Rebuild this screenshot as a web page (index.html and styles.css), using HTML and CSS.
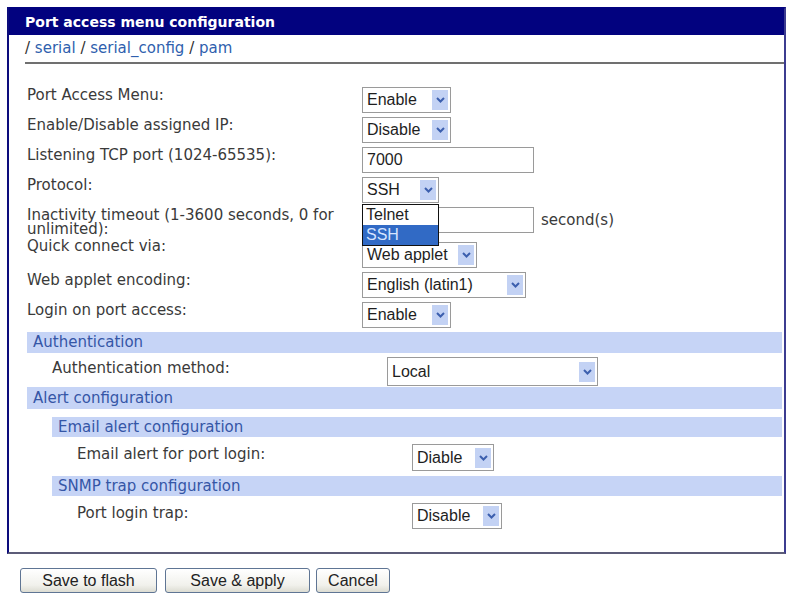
FILE: index.html
```html
<!DOCTYPE html>
<html>
<head>
<meta charset="utf-8">
<link rel="stylesheet" href="styles.css">
</head>
<body>
<div class="panel">
  <div class="title">Port access menu configuration</div>
  <div class="crumbs"><span class="sep">/</span> <a>serial</a> <span class="sep">/</span> <a>serial_config</a> <span class="sep">/</span> <a>pam</a></div>
  <div class="form">
    <div class="row">
      <div class="label">Port Access Menu:</div>
      <div class="sel w89"><span class="val">Enable</span><span class="arr"><svg width="9" height="6" viewBox="0 0 9 6"><polyline points="1,1 4.5,4.5 8,1" fill="none" stroke="#3c5fae" stroke-width="2"/></svg></span></div>
    </div>
    <div class="row">
      <div class="label">Enable/Disable assigned IP:</div>
      <div class="sel w89"><span class="val">Disable</span><span class="arr"><svg width="9" height="6" viewBox="0 0 9 6"><polyline points="1,1 4.5,4.5 8,1" fill="none" stroke="#3c5fae" stroke-width="2"/></svg></span></div>
    </div>
    <div class="row">
      <div class="label">Listening TCP port (1024-65535):</div>
      <div class="input w172">7000</div>
    </div>
    <div class="row">
      <div class="label">Protocol:</div>
      <div class="sel w77 open"><span class="val">SSH</span><span class="arr"><svg width="9" height="6" viewBox="0 0 9 6"><polyline points="1,1 4.5,4.5 8,1" fill="none" stroke="#3c5fae" stroke-width="2"/></svg></span>
        <div class="list"><div class="opt">Telnet</div><div class="opt picked">SSH</div></div>
      </div>
    </div>
    <div class="row row-wrap">
      <div class="label">Inactivity timeout (1-3600 seconds, 0 for unlimited):</div>
      <div class="input w172"></div>
      <span class="unit">second(s)</span>
    </div>
    <div class="row">
      <div class="label">Quick connect via:</div>
      <div class="sel w115 drop"><span class="val">Web applet</span><span class="arr"><svg width="9" height="6" viewBox="0 0 9 6"><polyline points="1,1 4.5,4.5 8,1" fill="none" stroke="#3c5fae" stroke-width="2"/></svg></span></div>
    </div>
    <div class="row">
      <div class="label">Web applet encoding:</div>
      <div class="sel w164"><span class="val">English (latin1)</span><span class="arr"><svg width="9" height="6" viewBox="0 0 9 6"><polyline points="1,1 4.5,4.5 8,1" fill="none" stroke="#3c5fae" stroke-width="2"/></svg></span></div>
    </div>
    <div class="row">
      <div class="label">Login on port access:</div>
      <div class="sel w89"><span class="val">Enable</span><span class="arr"><svg width="9" height="6" viewBox="0 0 9 6"><polyline points="1,1 4.5,4.5 8,1" fill="none" stroke="#3c5fae" stroke-width="2"/></svg></span></div>
    </div>

    <div class="bar">Authentication</div>
    <div class="group">
      <div class="row row-auth">
        <div class="label">Authentication method:</div>
        <div class="sel w211 tall"><span class="val">Local</span><span class="arr"><svg width="9" height="6" viewBox="0 0 9 6"><polyline points="1,1 4.5,4.5 8,1" fill="none" stroke="#3c5fae" stroke-width="2"/></svg></span></div>
      </div>
    </div>

    <div class="bar bar-alert">Alert configuration</div>
    <div class="group">
      <div class="bar bar-sub">Email alert configuration</div>
      <div class="group">
        <div class="row row-sub">
          <div class="label">Email alert for port login:</div>
          <div class="sel w82 mid"><span class="val">Diable</span><span class="arr"><svg width="9" height="6" viewBox="0 0 9 6"><polyline points="1,1 4.5,4.5 8,1" fill="none" stroke="#3c5fae" stroke-width="2"/></svg></span></div>
        </div>
      </div>
      <div class="bar bar-sub">SNMP trap configuration</div>
      <div class="group">
        <div class="row row-sub">
          <div class="label">Port login trap:</div>
          <div class="sel w90"><span class="val">Disable</span><span class="arr"><svg width="9" height="6" viewBox="0 0 9 6"><polyline points="1,1 4.5,4.5 8,1" fill="none" stroke="#3c5fae" stroke-width="2"/></svg></span></div>
        </div>
      </div>
    </div>
  </div>
</div>
<div class="buttons">
  <button class="btn b137">Save to flash</button>
  <button class="btn b145">Save &amp; apply</button>
  <button class="btn b74">Cancel</button>
</div>
</body>
</html>
```
FILE: styles.css
```css
html, body {
  margin: 0;
  padding: 0;
  background: #ffffff;
}
body {
  padding: 7px 0 0 7px;
  font-family: "DejaVu Sans", Verdana, sans-serif;
  font-size: 15px;
  color: #3a3a3a;
}
.panel {
  width: 775px;
  border: 2px solid #0c0c7c;
  border-bottom-color: #5c5c78;
  border-right-color: #3c3c90;
  padding-bottom: 18px;
}
.title {
  background: #02027f;
  color: #ffffff;
  font-weight: bold;
  font-size: 14px;
  height: 27px;
  line-height: 29px;
  padding-left: 16px;
  margin-top: -2px;
  padding-top: 1px;
}
.crumbs {
  margin-left: 16px;
  border-bottom: 2px solid #707070;
  height: 27px;
  line-height: 26px;
  font-size: 15px;
  color: #303030;
}
.crumbs a {
  color: #2f5fae;
  text-decoration: none;
}
.form {
  padding: 23px 2px 0 18px;
}
.row {
  display: flex;
  align-items: flex-start;
  margin-bottom: 4px;
  position: relative;
}
.row-wrap {
  margin-bottom: 2px;
}
.label {
  width: 335px;
  flex: none;
  padding-top: 1px;
  line-height: 14px;
  padding-right: 18px;
  box-sizing: border-box;
}
.sel, .input {
  box-sizing: border-box;
  height: 26px;
  border: 1px solid #9a9a9a;
  background: #fff;
  font-family: "Liberation Sans", Arial, sans-serif;
  font-size: 16px;
  color: #1e1e1e;
  flex: none;
}
.sel {
  position: relative;
  display: flex;
  align-items: center;
  padding: 0 2px 0 4px;
}
.sel .val {
  flex: 1;
  white-space: nowrap;
}
.arr {
  width: 16px;
  height: 20px;
  background: #c3d2f4;
  display: flex;
  align-items: center;
  justify-content: center;
  flex: none;
}
.input {
  padding-left: 4px;
  line-height: 24px;
}
.unit {
  margin-left: 7px;
  padding-top: 6px;
  line-height: 14px;
}
.w77 { width: 77px; }
.w82 { width: 82px; }
.w89 { width: 89px; }
.w90 { width: 90px; }
.w115 { width: 115px; }
.w164 { width: 164px; }
.w172 { width: 172px; }
.w211 { width: 211px; }
.tall { height: 29px; }
.mid { height: 27px; }
.drop { margin-top: 4px; }
.list {
  position: absolute;
  left: -1px;
  top: 26px;
  width: 77px;
  box-sizing: border-box;
  border: 1px solid #111;
  background: #fff;
  z-index: 2;
}
.opt {
  height: 20px;
  line-height: 20px;
  padding-left: 3px;
  font-size: 16px;
  color: #1e1e1e;
}
.opt.picked {
  background: #316ac5;
  color: #d6e4ff;
}
.bar {
  background: #c6d4f6;
  color: #3556a6;
  height: 21px;
  line-height: 21px;
  padding-left: 6px;
  font-size: 15px;
}
.bar-alert {
  height: 22px;
  line-height: 22px;
  margin-bottom: 8px;
}
.bar-sub {
  height: 20px;
  line-height: 20px;
}
.group {
  margin-left: 25px;
}
.row-auth {
  margin-top: 4px;
  margin-bottom: 1px;
}
.row-auth .label { padding-top: 4px; }
.row-sub {
  margin-top: 7px;
  margin-bottom: 5px;
}
.row-sub .label { padding-top: 3px; }
.buttons {
  display: flex;
  margin: 14px 0 0 13px;
}
.btn {
  height: 25px;
  padding: 0;
  margin-right: 7px;
  border: 1px solid #5f7594;
  border-radius: 3px;
  background: linear-gradient(#ffffff, #f1f1ec 70%, #dcdcd2);
  font-family: "Liberation Sans", Arial, sans-serif;
  font-size: 16px;
  color: #222;
}
.b137 { width: 137px; margin-right: 8px; }
.b145 { width: 145px; margin-right: 6px; }
.b74 { width: 74px; }
```
